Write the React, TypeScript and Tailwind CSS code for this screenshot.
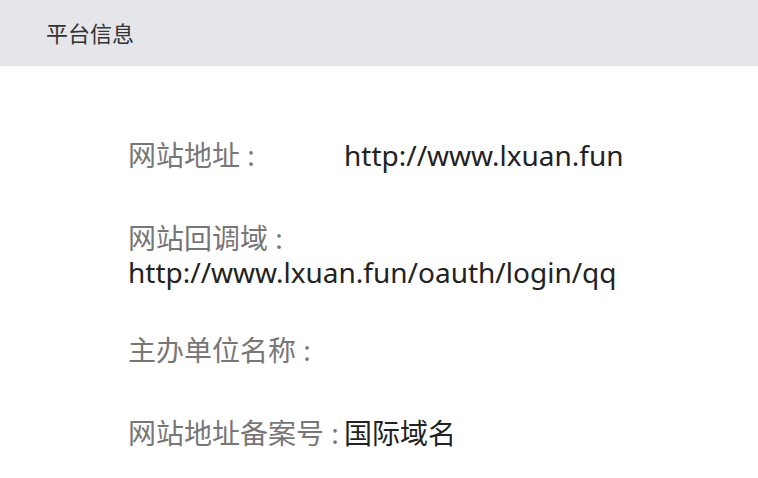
export default function App() {
  const rows = [
    { label: '网站地址 :', value: 'http://www.lxuan.fun', mb: 'mb-[49px]' },
    { label: '网站回调域 :', value: 'http://www.lxuan.fun/oauth/login/qq', mb: 'mb-[44px]' },
    { label: '主办单位名称 :', value: '', mb: 'mb-[49px]' },
    { label: '网站地址备案号 :', value: '国际域名', mb: '' },
  ]

  return (
    <div className="w-[758px] h-[478px] bg-white font-['Noto_Sans','Noto_Sans_CJK_SC',sans-serif] overflow-hidden">
      <div className="h-[66px] bg-[#e5e6e9] flex items-center px-[46px]">
        <h1 className="text-[22px] text-[#333] leading-none">平台信息</h1>
      </div>

      {/* info list */}
      <div className="px-[128px] pt-[72px] text-[28px] leading-[34px]">
        {rows.map((row, i) => (
          <p key={i} className={row.mb}>
            <span className="inline-block w-[216px] text-[#777]">{row.label}</span>
            <span className="text-[#222]">{row.value}</span>
          </p>
        ))}
      </div>
    </div>
  )
}
